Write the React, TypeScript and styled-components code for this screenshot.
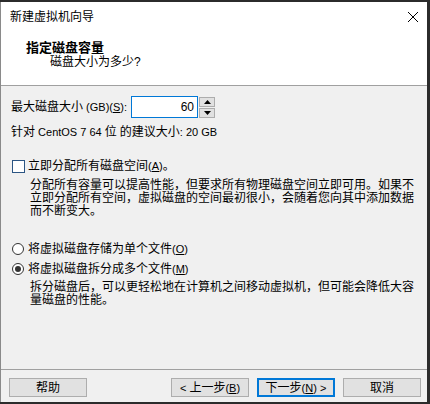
import React from 'react';
import styled, { createGlobalStyle } from 'styled-components';

const GlobalStyle = createGlobalStyle`
  html, body {
    margin: 0;
    padding: 0;
    background: #2b2b2b;
  }
  body {
    font-family: "Liberation Sans", "Noto Sans CJK SC", sans-serif;
    font-size: 12px;
    color: #000;
  }
`;

const Window = styled.div`
  box-sizing: border-box;
  margin-top: 2px;
  width: 427px;
  height: 400px;
  background: #f0f0f0;
  border-left: 1px solid #8a8a8a;
  display: flex;
  flex-direction: column;
`;

const TitleBar = styled.div`
  height: 30px;
  background: #fff;
  display: flex;
  align-items: center;
  justify-content: space-between;
  padding: 0 9px 0 9px;
  line-height: 14px;
`;

const CloseButton = styled.div`
  width: 30px;
  height: 30px;
  display: flex;
  align-items: center;
  justify-content: center;
  margin-right: -10px;
`;

const Header = styled.div`
  background: #fff;
  box-sizing: border-box;
  padding: 9px 0 0 25px;
  border-bottom: 1px solid #a0a0a0;
  height: 54px;
`;

const HeaderTitle = styled.div`
  font-size: 13px;
  font-weight: bold;
  line-height: 14px;
`;

const HeaderSub = styled.div`
  line-height: 14px;
  padding-left: 24px;
`;

const Body = styled.div`
  flex: 1;
  padding: 10px 10px 0 10px;
  display: flex;
  flex-direction: column;
`;

const FieldRow = styled.div`
  display: flex;
  align-items: center;
  height: 22px;
`;

const Label = styled.span`
  line-height: 14px;
  margin-right: 4px;
`;

const Spin = styled.div`
  display: flex;
  align-items: center;
  gap: 1px;
`;

const NumberBox = styled.div`
  box-sizing: border-box;
  width: 67px;
  height: 22px;
  background: #fff;
  border: 1px solid #0078d7;
  text-align: right;
  padding-right: 3px;
  line-height: 20px;
`;

const SpinButtons = styled.div`
  display: flex;
  flex-direction: column;
  gap: 1px;
`;

const SpinButton = styled.div`
  box-sizing: border-box;
  width: 16px;
  height: 10px;
  background: #e1e1e1;
  border: 1px solid #adadad;
  display: flex;
  align-items: center;
  justify-content: center;
`;

const Note = styled.div`
  line-height: 14px;
  margin-top: 7px;
`;

const OptionRow = styled.div<{ $gap: number }>`
  display: flex;
  align-items: center;
  margin-top: ${(p) => p.$gap}px;
  height: 14px;
`;

const CheckBox = styled.span`
  box-sizing: border-box;
  width: 13px;
  height: 13px;
  background: #fff;
  border: 1px solid #2b5583;
  margin-left: 1px;
  margin-right: 3px;
`;

const Radio = styled.span<{ $checked?: boolean }>`
  box-sizing: border-box;
  width: 12px;
  height: 12px;
  border-radius: 50%;
  background: #fff;
  border: 1px solid #333;
  margin-left: 1px;
  margin-right: 4px;
  display: flex;
  align-items: center;
  justify-content: center;
  &::after {
    content: '';
    display: ${(p) => (p.$checked ? 'block' : 'none')};
    width: 6px;
    height: 6px;
    border-radius: 50%;
    background: #333;
  }
`;

const OptionText = styled.span`
  line-height: 14px;
`;

const Desc = styled.div<{ $gap: number }>`
  margin-top: ${(p) => p.$gap}px;
  padding-left: 19px;
  line-height: 13px;
  width: 386px;
`;

/* latin runs are set a bit smaller, the CJK font's latin is narrow */
const Latin = styled.span`
  font-size: 11px;
`;

const Key = styled.span`
  text-decoration: underline;
`;

const Accel = ({ k }: { k: string }) => (
  <Latin>
    (<Key>{k}</Key>)
  </Latin>
);

const Footer = styled.div`
  height: 33px;
  box-sizing: border-box;
  border-top: 1px solid #a0a0a0;
  padding: 8px 6px 0 8px;
  display: flex;
  align-items: flex-start;
`;

const Button = styled.div<{ $default?: boolean; $gap?: number }>`
  box-sizing: border-box;
  width: 78px;
  height: 19px;
  margin-left: ${(p) => p.$gap ?? 0}px;
  background: #e1e1e1;
  border: ${(p) => (p.$default ? '2px solid #0078d7' : '1px solid #adadad')};
  display: flex;
  align-items: center;
  justify-content: center;
  line-height: 14px;
  white-space: pre;
`;

const Triangle = ({ down }: { down?: boolean }) => (
  <svg width="7" height="4" viewBox="0 0 7 4">
    <path d={down ? 'M0 0 L7 0 L3.5 4 Z' : 'M0 4 L7 4 L3.5 0 Z'} fill="#000" />
  </svg>
);

const App = () => (
  <>
    <GlobalStyle />
    <Window>
      <TitleBar>
        <span>新建虚拟机向导</span>
        <CloseButton>
          <svg width="10" height="10" viewBox="0 0 10 10">
            <path d="M0 0 L10 10 M10 0 L0 10" stroke="#000" strokeWidth="1" />
          </svg>
        </CloseButton>
      </TitleBar>
      <Header>
        <HeaderTitle>指定磁盘容量</HeaderTitle>
        <HeaderSub>磁盘大小为多少?</HeaderSub>
      </Header>
      <Body>
        <FieldRow>
          <Label>
            最大磁盘大小<Latin> (GB)</Latin>
            <Accel k="S" />
            <Latin>:</Latin>
          </Label>
          <Spin>
            <NumberBox>60</NumberBox>
            <SpinButtons>
              <SpinButton>
                <Triangle />
              </SpinButton>
              <SpinButton>
                <Triangle down />
              </SpinButton>
            </SpinButtons>
          </Spin>
        </FieldRow>
        <Note>
          针对<Latin> CentOS 7 64 </Latin>位<Latin> </Latin>的建议大小<Latin>: 20 GB</Latin>
        </Note>

        <OptionRow $gap={20}>
          <CheckBox />
          <OptionText>
            立即分配所有磁盘空间<Accel k="A" />。
          </OptionText>
        </OptionRow>
        <Desc $gap={6}>
          分配所有容量可以提高性能，但要求所有物理磁盘空间立即可用。如果不立即分配所有空间，虚拟磁盘的空间最初很小，会随着您向其中添加数据而不断变大。
        </Desc>

        <OptionRow $gap={24}>
          <Radio />
          <OptionText>
            将虚拟磁盘存储为单个文件<Accel k="O" />
          </OptionText>
        </OptionRow>
        <OptionRow $gap={6}>
          <Radio $checked />
          <OptionText>
            将虚拟磁盘拆分成多个文件<Accel k="M" />
          </OptionText>
        </OptionRow>
        <Desc $gap={5}>
          拆分磁盘后，可以更轻松地在计算机之间移动虚拟机，但可能会降低大容量磁盘的性能。
        </Desc>
      </Body>
      <Footer>
        <Button>帮助</Button>
        <Button $gap={84}>
          <Latin>&lt; </Latin>上一步<Accel k="B" />
        </Button>
        <Button $default $gap={8}>
          下一步<Accel k="N" />
          <Latin> &gt;</Latin>
        </Button>
        <Button $gap={8}>取消</Button>
      </Footer>
    </Window>
  </>
);

export default App;
